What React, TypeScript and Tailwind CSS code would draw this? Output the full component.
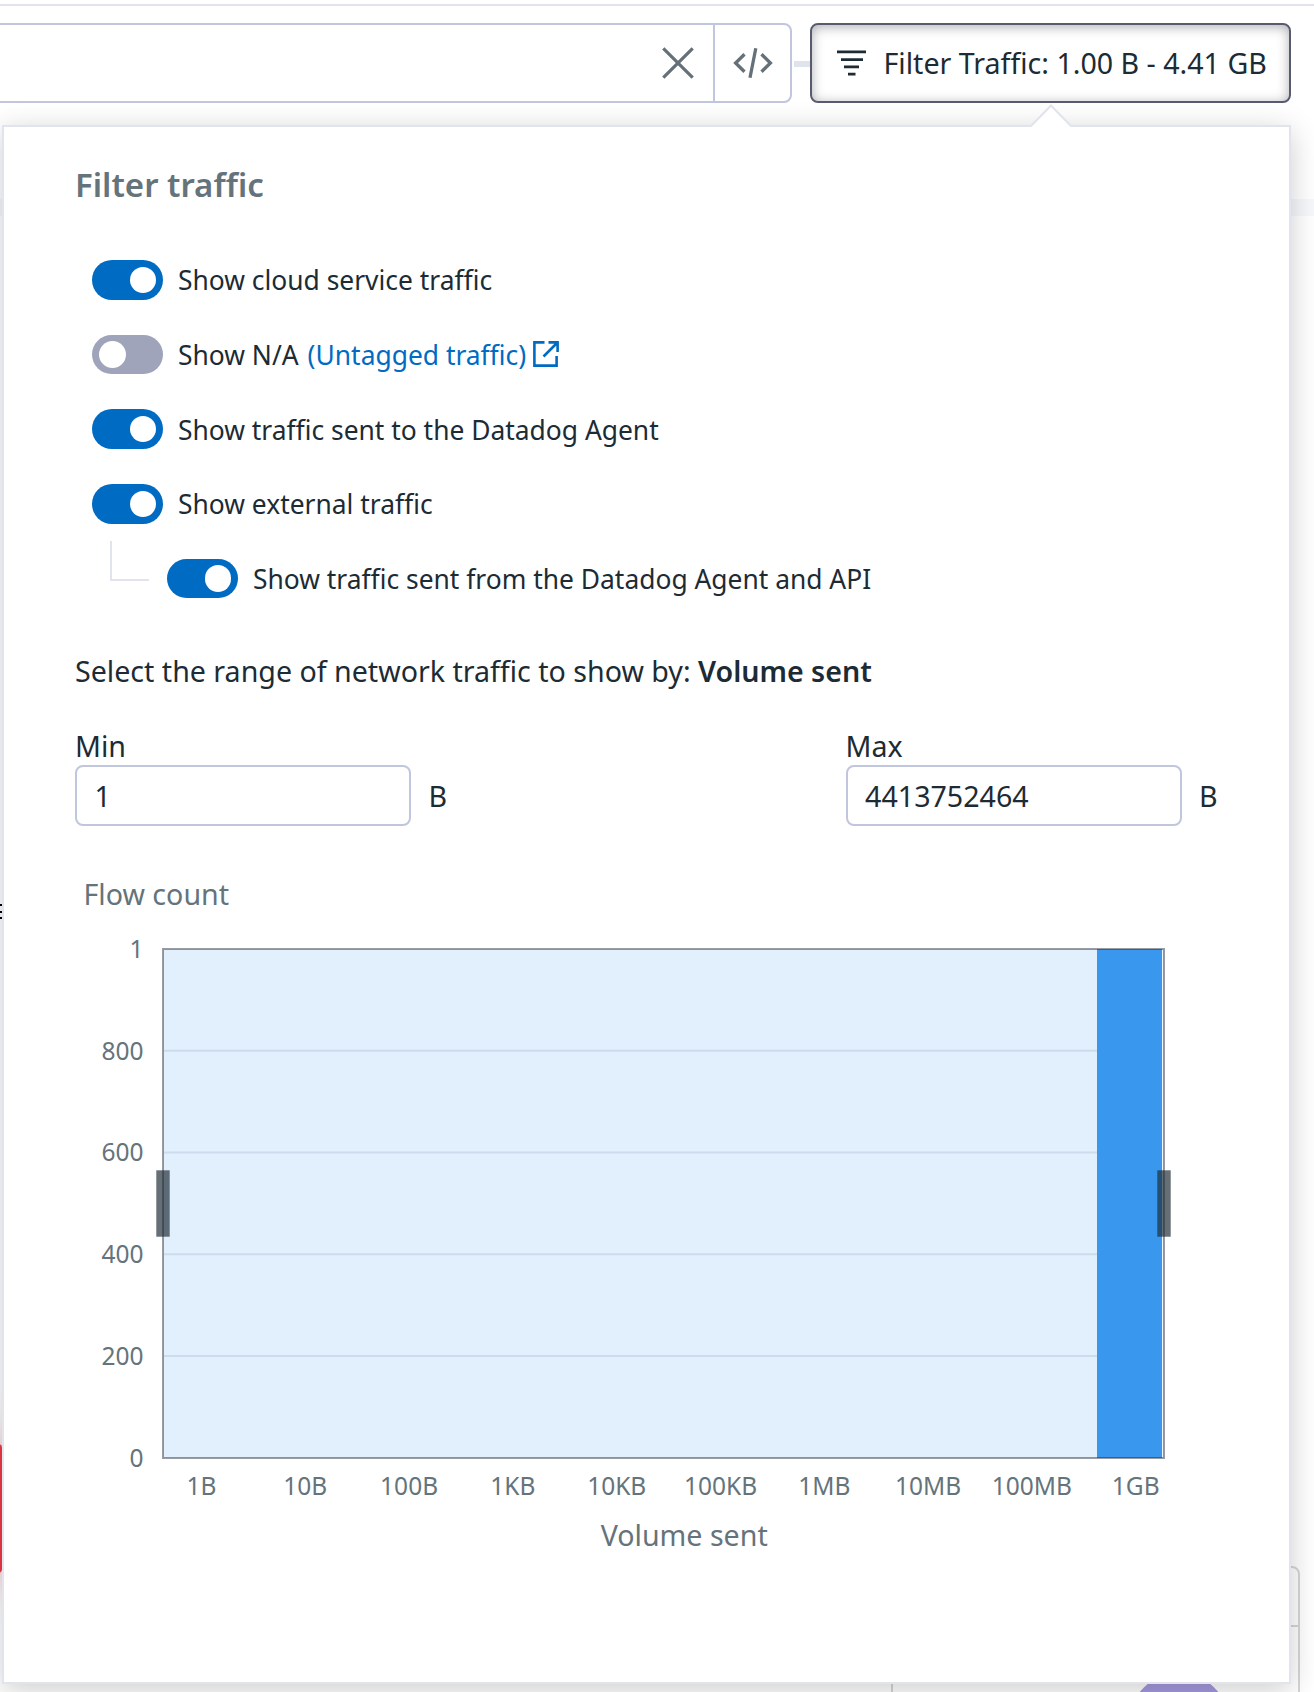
import React from "react";

const yTicks = ["1", "800", "600", "400", "200", "0"];
const xTicks = ["1B", "10B", "100B", "1KB", "10KB", "100KB", "1MB", "10MB", "100MB", "1GB"];

function Toggle({ on }: { on: boolean }) {
  return (
    <span
      role="switch"
      aria-checked={on}
      className={
        on
          ? "flex h-[39.5px] w-[71px] shrink-0 items-center justify-end rounded-full bg-[#006bc2] px-[7px]"
          : "flex h-[39.5px] w-[71px] shrink-0 items-center justify-start rounded-full bg-[#9fa4ba] px-[7px]"
      }
    >
      <span className="h-[26.5px] w-[26.5px] rounded-full bg-white" />
    </span>
  );
}

function ToggleRow({ on, children }: { on: boolean; children: React.ReactNode }) {
  return (
    <div className="flex h-[74.7px] items-center gap-[15px] text-[26.4px] whitespace-nowrap">
      <Toggle on={on} />
      <span className="flex items-center pt-[2.5px]">{children}</span>
    </div>
  );
}

function NumberField({ label, value }: { label: string; value: string }) {
  return (
    <label className="flex flex-col">
      <span className="h-[39px] leading-[39px]">{label}</span>
      <span className="flex items-center gap-[17.5px]">
        <input
          readOnly
          value={value}
          className="h-[61px] w-[336px] rounded-[8px] border-2 border-[#c0c6de] bg-white px-[17.5px] pt-[1px] outline-none"
        />
        <span className="pt-[1px] leading-[39px]">B</span>
      </span>
    </label>
  );
}

function FlowChart() {
  return (
    <svg width="1130" height="640" viewBox="75 930 1130 640" className="block" fontSize="24.5" fill="#65737b">
      <rect x="163" y="949" width="1001" height="509" fill="#e2f0fe" />
      {yTicks.map((t, i) => (
        <g key={t}>
          {i > 0 && i < 5 && <rect x="164" y={948 + i * 101.75} width="999" height="2" fill="#ccdced" />}
          <text x="143.5" y={957.8 + i * 101.75} textAnchor="end">{t}</text>
        </g>
      ))}
      <rect x="1097" y="949" width="65" height="509" fill="#3998ee" />
      <rect x="1162" y="950" width="1" height="507" fill="#eef6ff" />
      <rect x="163" y="949" width="1001" height="509" fill="none" stroke="#1c2333" strokeOpacity="0.45" strokeWidth="2" />
      {[156, 1157].map((x) => (
        <rect key={x} x={x + 0.5} y="1170.5" width="13" height="66" fill="#1c2b34" fillOpacity="0.68" stroke="#1c2b34" strokeOpacity="0.2" />
      ))}
      {xTicks.map((t, i) => (
        <text key={t} x={201.5 + i * 103.8} y="1495" textAnchor="middle">{t}</text>
      ))}
      <text x="684.2" y="1545.5" textAnchor="middle" fontSize="28.6">Volume sent</text>
    </svg>
  );
}

export default function App() {
  return (
    <div className="relative h-[1692px] w-[1314px] overflow-hidden bg-white font-['Noto_Sans',sans-serif] text-[28.6px] text-[#1c2b34]">
      {/* Page content that shows around the popover */}
      <div className="absolute top-[199px] left-0 h-[17px] w-full bg-[#f7f8fb]" />
      <div className="absolute top-[1566px] left-[891px] h-[200px] w-[409px] rounded-[8px] border-2 border-[#d6d6d6]">
        <div className="mt-[57px] h-[2px] bg-[#d6d6d6]" />
      </div>
      <div className="absolute top-[1673px] left-[1129px] h-[100px] w-[100px] rounded-full bg-[#a499de]" />
      <div className="absolute top-[1444px] -left-[10px] h-[129px] w-[12px] rounded-[4px] bg-[#f03a4a] shadow-[0_0_40px_8px_rgba(240,58,74,0.4)]" />
      <div className="absolute top-[904px] left-0 flex h-[15px] w-[2px] flex-col justify-between">
        <span className="h-[2px] bg-black" />
        <span className="h-[2px] bg-black" />
        <span className="h-[2px] bg-black" />
      </div>

      <header className="mt-[4px] flex items-center border-t-2 border-[#e1e3ed] pt-[17px]">
        <div className="-ml-[10px] flex h-[80px] w-[802px] shrink-0 rounded-[8px] border-2 border-[#c0c6de] bg-white">
          <div className="flex flex-1 items-center justify-end pr-[19px]">
            <svg width="32" height="32" viewBox="0 0 32 32" fill="none" stroke="#657078" strokeWidth="3.2">
              <path d="M1.3 1.3 30.7 30.7M30.7 1.3 1.3 30.7" />
            </svg>
          </div>
          <div className="flex w-[77px] items-center justify-center border-l-2 border-[#c0c6de]">
            <svg width="40" height="32" viewBox="0 0 40 32" fill="none" stroke="#657078" strokeWidth="3.3">
              <path d="M11.5 7.3 2.6 16l8.9 8.7M28.5 7.3l8.9 8.7-8.9 8.7M22.8 1.2 17 30.8" />
            </svg>
          </div>
        </div>
        <div className="mt-[2px] ml-[2px] h-[6px] w-[16px] bg-[#dfe3eb]" />
        <button className="relative z-20 flex h-[80px] w-[481px] shrink-0 items-center rounded-[8px] border-2 border-[#585a6e] bg-white pl-[25px] whitespace-nowrap shadow-[inset_0_2px_12px_rgba(28,30,45,0.36)]">
          <svg width="29" height="26" viewBox="0 0 29 26" fill="#1c2b34">
            <path d="M0 .5h29v2.8H0zM4 8.3h22v2.8H4zM7 15.5h15v2.8H7zM11 22.8h7.500v2.8H11z" />
          </svg>
          <span className="ml-[17.5px]">Filter Traffic: 1.00 B - 4.41 GB</span>
        </button>
      </header>

      <section className="absolute top-[125px] left-[2px] z-10 h-[1559px] w-[1289px] border-2 border-[#e1e4ec] bg-white pl-[71px] shadow-[0_6px_28px_rgba(0,0,0,0.2)]">
        <svg className="absolute -top-[24px] left-[1027px]" width="40" height="25" viewBox="0 0 40 25">
          <path d="M0 24 20 3l20 21v1H0z" fill="#fff" />
          <path d="M0 23 20 2.500l20 20.500" fill="none" stroke="#e1e4ec" strokeWidth="2" />
        </svg>
        <h2 className="mt-[36px] h-[44px] text-[33px] leading-[44px] font-semibold text-[#65737b]">Filter traffic</h2>
        <div className="mt-[35.5px] pl-[17px]">
          <ToggleRow on>Show cloud service traffic</ToggleRow>
          <ToggleRow on={false}>
            Show N/A
            <a className="ml-[9px] flex items-center text-[#006bc2]">
              (Untagged traffic)
              <svg className="-mt-[4px] ml-[6px]" width="28" height="28" viewBox="0 0 28 28" fill="none" stroke="#006bc2" strokeWidth="2.6">
                <path d="M12.500 2.400H2.400V25.600H24.600V16M16.500 2.400H25.600V12M25 3 11.500 16.500" />
              </svg>
            </a>
          </ToggleRow>
          <ToggleRow on>Show traffic sent to the Datadog Agent</ToggleRow>
          <ToggleRow on>Show external traffic</ToggleRow>
          <div className="flex pl-[18px]">
            <span className="h-[39.5px] w-[39px] border-b-2 border-l-2 border-[#e1e3ed]" />
            <div className="ml-[18px]">
              <ToggleRow on>Show traffic sent from the Datadog Agent and API</ToggleRow>
            </div>
          </div>
        </div>
        <p className="mt-[35px] h-[40px] leading-[39px]">
          Select the range of network traffic to show by: <span className="font-semibold">Volume sent</span>
        </p>
        <div className="mt-[35px] flex gap-[398.5px]">
          <NumberField label="Min" value="1" />
          <NumberField label="Max" value="4413752464" />
        </div>
        <div className="mt-[48px] h-[40px] pl-[8.5px] leading-[39px] text-[#65737b]">Flow count</div>
        <div className="mt-[16px]">
          <FlowChart />
        </div>
      </section>
    </div>
  );
}
